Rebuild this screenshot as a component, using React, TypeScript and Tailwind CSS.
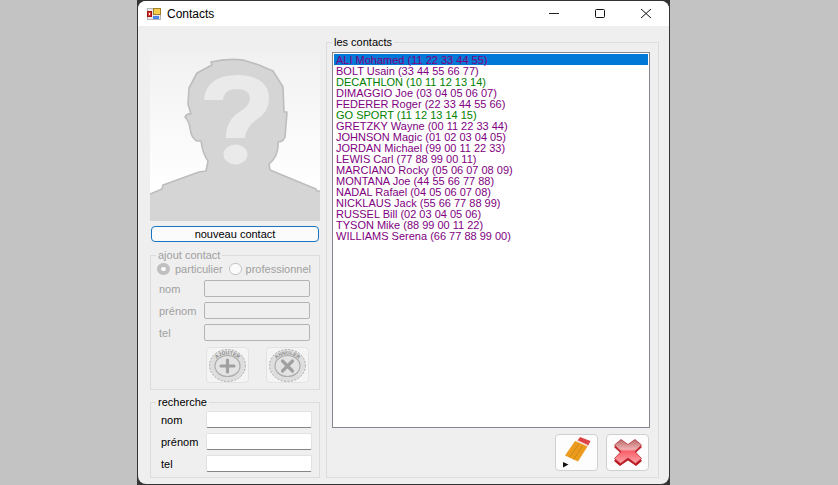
import { useState } from "react";
import type { ReactNode } from "react";

type Contact = { name: string; tel: string; pro?: boolean };

const contacts: Contact[] = [
  { name: "ALI Mohamed", tel: "11 22 33 44 55" },
  { name: "BOLT Usain", tel: "33 44 55 66 77" },
  { name: "DECATHLON", tel: "10 11 12 13 14", pro: true },
  { name: "DIMAGGIO Joe", tel: "03 04 05 06 07" },
  { name: "FEDERER Roger", tel: "22 33 44 55 66" },
  { name: "GO SPORT", tel: "11 12 13 14 15", pro: true },
  { name: "GRETZKY Wayne", tel: "00 11 22 33 44" },
  { name: "JOHNSON Magic", tel: "01 02 03 04 05" },
  { name: "JORDAN Michael", tel: "99 00 11 22 33" },
  { name: "LEWIS Carl", tel: "77 88 99 00 11" },
  { name: "MARCIANO Rocky", tel: "05 06 07 08 09" },
  { name: "MONTANA Joe", tel: "44 55 66 77 88" },
  { name: "NADAL Rafael", tel: "04 05 06 07 08" },
  { name: "NICKLAUS Jack", tel: "55 66 77 88 99" },
  { name: "RUSSEL Bill", tel: "02 03 04 05 06" },
  { name: "TYSON Mike", tel: "88 99 00 11 22" },
  { name: "WILLIAMS Serena", tel: "66 77 88 99 00" },
];

function AppIcon() {
  return (
    <svg viewBox="0 0 14 12" className="h-3 w-3.5" aria-hidden="true">
      <rect x="0.5" y="0.5" width="13" height="11" fill="#e9e9e9" stroke="#b5b5b5" />
      <rect x="6" y="0" width="8" height="7" fill="#a5802b" />
      <rect x="7" y="1" width="6" height="5" fill="#f8cf4c" />
      <rect x="0" y="3" width="5" height="6" fill="#a31515" />
      <rect x="1" y="4" width="3" height="4" fill="#d8372c" />
      <rect x="2" y="5" width="1" height="2" fill="#fff" />
      <rect x="6" y="8" width="6" height="3" fill="#4d86ea" />
    </svg>
  );
}

function Portrait() {
  return (
    <svg viewBox="0 0 170 169" className="block w-full" role="img" aria-label="photo du contact">
      <defs>
        <linearGradient id="sky" x1="0" y1="0" x2="0" y2="1">
          <stop offset="0" stopColor="#f1f1f1" />
          <stop offset="0.8" stopColor="#ffffff" />
        </linearGradient>
      </defs>
      <rect width="170" height="169" fill="url(#sky)" />
      <path
        d="M-2 143 L12 137 L13 133 L49 120 L56 119 L58 109 Q53 103 51 89 L47 89 Q41 86 40 76 Q39 69 35 65 Q37 61 41 62 L38 52 L39 36 L47 21 L62 13 L61 10 Q77 6 93 8 L109 13 L123 19 L133 35 L134 60 L137 60 L135 85 Q133 90 128 90 Q129 104 119 112 L120 118 L166 137 L167 139 L172 139 L172 172 L-2 172 Z"
        fill="#d5d5d5"
        stroke="#bdbdbd"
        strokeWidth="1.6"
        strokeLinejoin="round"
      />
      <path
        d="M54 48 Q56 23 88 23 Q119 24 119 47 Q119 60 106 68 Q96 75 95 86 L76 86 Q76 69 88 61 Q100 54 100 46 Q99 37 87 37 Q74 37 73 48 Z"
        fill="#eaeaea"
      />
      <ellipse cx="85.500" cy="102.500" rx="12" ry="10" fill="#eaeaea" />
    </svg>
  );
}

function Token({ id, label, d }: { id: string; label: string; d: string }) {
  return (
    <svg viewBox="0 0 37 33" className="h-[33px] w-[37px]" aria-hidden="true">
      <ellipse cx="18.500" cy="16.500" rx="18" ry="16" fill="#dedede" stroke="#9c9c9c" strokeWidth="0.8" strokeDasharray="2 1.500" />
      <ellipse cx="18.500" cy="17" rx="12.500" ry="10.500" fill="#e3e3e3" stroke="#adadad" strokeWidth="1.200" />
      <path id={id} d="M4.500 17.500 A14 12 0 0 1 32.500 17.500" fill="none" />
      <text fontSize="5" fontWeight="700" fill="#8d8d8d" textAnchor="middle">
        <textPath href={"#" + id} startOffset="50%">
          {label}
        </textPath>
      </text>
      <path d={d} stroke="#a0a0a0" strokeWidth="3.200" strokeLinecap="round" fill="none" />
    </svg>
  );
}

function Pencil() {
  return (
    <svg viewBox="0 0 30 32" className="h-8 w-[30px]" aria-hidden="true">
      <path d="M15.500 3.500 L18 0 L28.500 4 L26 9 Z" fill="#e04343" />
      <path d="M14 4.500 L15 3 L26 8 L25 10 Z" fill="#f4dfda" />
      <path d="M13 4 L25.500 9.500 L16 24.500 L3 18.500 Z" fill="#eb9c1c" />
      <path d="M17 6.500 L7.500 20.500 M21 8.500 L11.500 22.500" stroke="#c9820f" strokeWidth="0.8" />
      <path d="M1 25 L6.500 27.500 L1 30.500 Z" fill="#111" />
    </svg>
  );
}

function RedCross() {
  return (
    <svg viewBox="0 0 28 27" className="h-[27px] w-7" aria-hidden="true">
      <defs>
        <linearGradient id="cross" x1="0" y1="0" x2="0" y2="1">
          <stop offset="0" stopColor="#b96a6a" />
          <stop offset="0.4" stopColor="#eeb0b0" />
          <stop offset="0.5" stopColor="#f9606a" />
          <stop offset="1" stopColor="#ffa6a8" />
        </linearGradient>
      </defs>
      <path d="M7 3 L14 7 L21 3 L27.500 8 L21 14 L27.500 22 L22 26.500 L14 21 L6 26.500 L0.500 22 L7 14 L0.500 8 Z" fill="#c4161f" stroke="#b3121b" strokeWidth="0.8" strokeLinejoin="round" />
      <path d="M7 0.500 L14 5.500 L21 0.500 L27.500 6 L21 12.500 L27.500 19.500 L21.500 24.500 L14 19 L6.500 24.500 L0.500 19.500 L7 12.500 L0.500 6 Z" fill="url(#cross)" stroke="#b5333a" strokeWidth="0.8" strokeLinejoin="round" />
    </svg>
  );
}

function Field({ id, label, disabled }: { id: string; label: string; disabled?: boolean }) {
  return (
    <div className="flex h-[17px] items-center">
      <label htmlFor={id} className="w-[45px]">
        {label}
      </label>
      <input
        id={id}
        type="text"
        className={
          disabled
            ? "h-[17px] min-w-0 flex-1 rounded-xs border border-[#b4b4b6] px-1"
            : "h-[17px] min-w-0 flex-1 rounded-xs border border-[#e2e2e2] border-b-[#858585] bg-white px-1"
        }
      />
    </div>
  );
}

function Group({ title, disabled, className, children }: { title: string; disabled?: boolean; className?: string; children: ReactNode }) {
  return (
    <fieldset disabled={disabled} className={"min-w-0 border border-[#dcdcdc] " + (className ?? "")}>
      <legend className="ml-[5px] h-3 px-0.5">{title}</legend>
      {children}
    </fieldset>
  );
}

const radioClass =
  "h-3 w-[13px] shrink-0 appearance-none rounded-full border border-[#c4c4c4] bg-[#fbfbfb] checked:border-4 checked:border-[#c0c0c0]";

export default function App() {
  const [selected, setSelected] = useState("ALI Mohamed");

  return (
    <div className="flex min-h-screen flex-col bg-[#c3c3c3] pl-[137px] pr-[168px] font-['Liberation_Sans',Arial,sans-serif] text-[11px] leading-3 text-black">
      <main className="flex flex-1 flex-col bg-[#333] px-px pt-px pb-px">
        <div className="flex flex-1 flex-col overflow-hidden rounded-lg bg-[#efefef]">
          <header className="flex h-[25px] items-center bg-white pl-[9px]">
            <AppIcon />
            <h1 className="ml-1.5 flex-1 text-xs">Contacts</h1>
            <button type="button" aria-label="Réduire" className="flex h-6 w-[46px] items-center justify-center">
              <svg viewBox="0 0 10 10" className="size-2.5">
                <path d="M0 4.500H10" stroke="#222" />
              </svg>
            </button>
            <button type="button" aria-label="Agrandir" className="flex h-6 w-[46px] items-center justify-center">
              <svg viewBox="0 0 10 10" className="size-2.5" fill="none">
                <rect x="0.5" y="0.5" width="9" height="8" rx="1" stroke="#111" />
              </svg>
            </button>
            <button type="button" aria-label="Fermer" className="flex h-6 w-[46px] items-center justify-center">
              <svg viewBox="0 0 10 10" className="size-2.5">
                <path d="M0 0L10 9M10 0L0 9" stroke="#111" />
              </svg>
            </button>
          </header>

          <div className="flex flex-1 gap-1.5 pt-2.5 pr-2.5 pb-1.5 pl-3">
            <section className="flex w-[170px] flex-col pt-4">
              <Portrait />
              <button
                type="button"
                className="mx-px mt-[5px] flex h-4 items-center justify-center rounded-sm border border-[#1a73c0] bg-[#fbfbfb]"
              >
                nouveau contact
              </button>

              <Group title="ajout contact" disabled className="mt-[7px] pb-1.5 text-[#a0a0a0]">
                <div className="mt-0.5 flex items-center pr-2 pl-1.5">
                  <input id="particulier" name="type" type="radio" defaultChecked className={radioClass} />
                  <label htmlFor="particulier" className="ml-[5px] flex-1">
                    particulier
                  </label>
                  <input id="professionnel" name="type" type="radio" className={radioClass} />
                  <label htmlFor="professionnel" className="ml-1">
                    professionnel
                  </label>
                </div>
                <div className="mt-[5px] flex flex-col gap-[5px] pr-[9px] pl-2">
                  <Field id="ajout-nom" label="nom" disabled />
                  <Field id="ajout-prenom" label="prénom" disabled />
                  <Field id="ajout-tel" label="tel" disabled />
                </div>
                <div className="mt-1.5 flex justify-end gap-[17px] pr-2.5">
                  <button type="button" aria-label="Ajouter" className="flex h-9 w-[43px] items-center justify-center rounded-sm border border-[#e3e3e3] bg-[#f4f4f4]">
                    <Token id="arc-ajouter" label="AJOUTER" d="M18.500 11V23M12 17H25" />
                  </button>
                  <button type="button" aria-label="Annuler" className="flex h-9 w-[43px] items-center justify-center rounded-sm border border-[#e3e3e3] bg-[#f4f4f4]">
                    <Token id="arc-annuler" label="ANNULER" d="M13.500 12L23.500 22M23.500 12L13.500 22" />
                  </button>
                </div>
              </Group>

              <Group title="recherche" className="mt-1.5 pb-[5px]">
                <div className="mt-[3px] flex flex-col gap-[5px] pr-[7px] pl-2.5">
                  <Field id="recherche-nom" label="nom" />
                  <Field id="recherche-prenom" label="prénom" />
                  <Field id="recherche-tel" label="tel" />
                </div>
              </Group>
            </section>

            <Group title="les contacts" className="flex-1 pb-1.5">
              <div className="mt-1 mr-2 ml-[5px]">
                <select
                  size={17}
                  aria-label="les contacts"
                  value={selected}
                  onChange={(e) => setSelected(e.target.value)}
                  className="block h-[376px] w-full appearance-none overflow-hidden border border-[#828790] bg-white p-px outline-none"
                >
                  {contacts.map((c) => (
                    <option
                      key={c.name}
                      value={c.name}
                      className={
                        "block h-[11px] min-h-0 p-0 pl-0.5 text-[11px] leading-[11px] checked:bg-[linear-gradient(#0078d7,#0078d7)] " +
                        (c.pro ? "text-[#008000]" : "text-[#800080]")
                      }
                    >
                      {c.name + " (" + c.tel + ")"}
                    </option>
                  ))}
                </select>
                <div className="mt-1.5 mr-px flex justify-end gap-2">
                  <button type="button" aria-label="Modifier" className="flex h-[37px] w-[43px] items-center justify-center rounded-sm border border-[#d0d0d0] bg-[#fdfdfd]">
                    <Pencil />
                  </button>
                  <button type="button" aria-label="Supprimer" className="flex h-[37px] w-[43px] items-center justify-center rounded-sm border border-[#d0d0d0] bg-[#fdfdfd]">
                    <RedCross />
                  </button>
                </div>
              </div>
            </Group>
          </div>
        </div>
      </main>
    </div>
  );
}
